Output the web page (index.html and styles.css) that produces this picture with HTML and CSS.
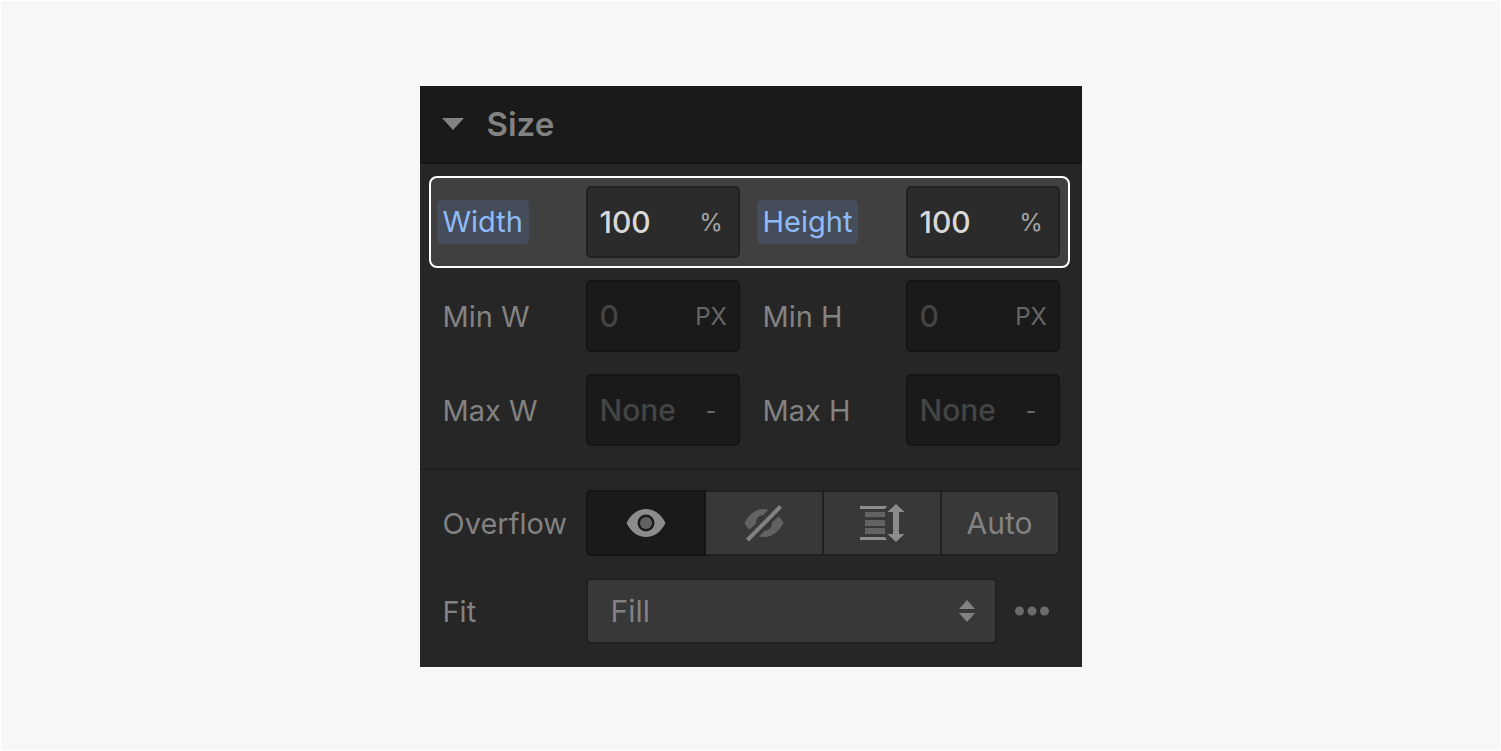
FILE: index.html
```html
<!DOCTYPE html>
<html lang="en">

<head>
    <meta charset="UTF-8">
    <meta name="viewport" content="width=device-width, initial-scale=1.0">
    <title>Size</title>
    <link rel="stylesheet" href="styles.css">
</head>

<body>
    <div class="panel">
        <button class="panel-header">
            <svg class="arrow" width="22" height="12" viewBox="0 0 22 12">
                <path d="M0 0H22L11 12Z" />
            </svg>
            <span>Size</span>
        </button>

        <!-- width / height -->
        <div class="sizes">
            <div class="row highlighted">
                <label for="width"><span class="tag">Width</span></label>
                <div class="field">
                    <input type="text" id="width" value="100">
                    <button class="unit">%</button>
                </div>
                <label class="second" for="height"><span class="tag">Height</span></label>
                <div class="field">
                    <input type="text" id="height" value="100">
                    <button class="unit">%</button>
                </div>
            </div>
            <div class="row">
                <label for="minW">Min W</label>
                <div class="field">
                    <input type="text" id="minW" placeholder="0">
                    <button class="unit">PX</button>
                </div>
                <label class="second" for="minH">Min H</label>
                <div class="field">
                    <input type="text" id="minH" placeholder="0">
                    <button class="unit">PX</button>
                </div>
            </div>
            <div class="row">
                <label for="maxW">Max W</label>
                <div class="field">
                    <input type="text" id="maxW" placeholder="None">
                    <button class="unit">-</button>
                </div>
                <label class="second" for="maxH">Max H</label>
                <div class="field">
                    <input type="text" id="maxH" placeholder="None">
                    <button class="unit">-</button>
                </div>
            </div>
        </div>

        <!-- overflow / fit -->
        <div class="options">
            <div class="option">
                <span class="option-label" id="overflowLabel">Overflow</span>
                <div class="segments" role="group" aria-labelledby="overflowLabel">
                    <button class="active" aria-label="Visible" aria-pressed="true">
                        <svg width="40" height="40" viewBox="0 0 40 40">
                            <path class="light" fill-rule="evenodd" d="M0.5 20C5 11 12 6 20 6S35 11 39.500 20C35 29 28 34 20 34S5 29 0.500 20ZM20 11.500A8.500 8.500 0 1 0 20 28.500A8.500 8.500 0 1 0 20 11.500Z" />
                            <circle class="dim" cx="20" cy="20" r="6" />
                        </svg>
                    </button>
                    <button aria-label="Hidden">
                        <svg width="40" height="40" viewBox="0 0 40 40">
                            <path class="dim" d="M24.500 6.500C13 4 5 11 0.500 20C2 23 3.500 25 5.500 26.500L12 20.500C11.500 16 15 12 19.500 12Z" />
                            <path class="dim" d="M15 33.500C27 36 35 29 39.500 20C38 17 36.500 15 34.500 13.500L28 19.500C28.500 24 25 28 20.500 28Z" />
                            <path class="stroke" d="M3.500 37L36.500 3.500" />
                        </svg>
                    </button>
                    <button aria-label="Scroll">
                        <svg width="46" height="40" viewBox="0 0 46 40">
                            <path class="light" d="M1 3H28L26 6H1ZM1 34H26L28 37H1Z" />
                            <path class="dim" d="M6 9H26V14H6ZM6 17H26V23H6ZM6 25H26V31H6Z" />
                            <path class="light" d="M37 1L45.500 9H40V31H45.500L37 39L28.500 31H34V9H28.500Z" />
                        </svg>
                    </button>
                    <button>Auto</button>
                </div>
            </div>
            <div class="option">
                <label class="option-label" for="fit">Fit</label>
                <div class="select">
                    <select id="fit">
                        <option>Fill</option>
                        <option>Contain</option>
                        <option>Cover</option>
                        <option>None</option>
                    </select>
                    <svg class="carets" width="16" height="22" viewBox="0 0 16 22">
                        <path d="M8 0L16 9H0ZM8 22L0 13H16Z" />
                    </svg>
                </div>
                <button class="more" aria-label="More">
                    <svg width="34" height="10" viewBox="0 0 34 10">
                        <circle cx="4.500" cy="5" r="4.500" />
                        <circle cx="17" cy="5" r="4.500" />
                        <circle cx="29.500" cy="5" r="4.500" />
                    </svg>
                </button>
            </div>
        </div>
    </div>
</body>

</html>
```
FILE: styles.css
```css
* {
    box-sizing: border-box;
}

body {
    min-height: 100vh;
    margin: 0;
    padding: 85px 20px 20px;
    background-color: #f5f7f9;
    border: 1px solid #fff;
    font-family: Inter, "Liberation Sans", sans-serif;
    font-size: 30px;
    color: #828282;
}

button,
input,
select {
    font: inherit;
    color: inherit;
    margin: 0;
    padding: 0;
    border: none;
    background: none;
}

svg {
    display: block;
}

label,
.option-label {
    font-size: 29px;
}

.panel {
    max-width: 662px;
    margin: 0 auto;
    background-color: #262626;
}

.panel-header {
    display: flex;
    align-items: center;
    gap: 23px;
    width: 100%;
    height: 78px;
    padding: 0 22px;
    background-color: #1a1a1a;
    border-bottom: 2px solid #151515;
    font-size: 33px;
    font-weight: 600;
}

.arrow {
    fill: #828282;
}

.sizes {
    display: flex;
    flex-direction: column;
    gap: 2px;
    padding: 12px 12px 12px 9px;
    border-bottom: 2px solid #1f1f1f;
}

.row {
    display: grid;
    grid-template-columns: 143px minmax(0, 1fr) 166px minmax(0, 1fr);
    align-items: center;
    padding: 8px 8px 8px 12px;
    border: 2px solid transparent;
    border-radius: 8px;
}

.row.highlighted {
    background-color: #404040;
    border-color: #fff;
}

.second {
    padding-left: 23px;
}

.tag {
    display: inline-block;
    margin-left: -6px;
    padding: 0 6px;
    line-height: 44px;
    border-radius: 5px;
    background-color: #454d5b;
    color: #8ebbf8;
}

.field {
    display: flex;
    height: 72px;
    background-color: #1a1a1a;
    border: 2px solid #151515;
    border-radius: 5px;
}

.field input {
    flex: 1;
    width: 100%;
    min-width: 0;
    padding-left: 12px;
    font-weight: 500;
}

.field input::placeholder {
    color: #444;
    opacity: 1;
}

.unit {
    flex: none;
    width: 53px;
    font-size: 24px;
    color: #666;
}

.highlighted .field {
    background-color: #2b2b2b;
    border-color: #212121;
}

.highlighted input {
    color: #d9d9d9;
}

.highlighted .unit {
    color: #a6a6a6;
}

.options {
    display: flex;
    flex-direction: column;
    gap: 22px;
    padding: 20px 22px 23px 23px;
}

.option {
    display: flex;
    align-items: center;
}

.option-label {
    width: 143px;
}

.segments {
    flex: 1;
    display: grid;
    grid-template-columns: repeat(4, 1fr);
    gap: 2px;
    height: 66px;
    padding: 2px;
    background-color: #202020;
    border-radius: 5px;
}

.segments button {
    display: flex;
    align-items: center;
    justify-content: center;
    background-color: #383838;
}

.segments button:last-child {
    border-radius: 0 4px 4px 0;
}

.segments .active {
    margin: -2px;
    background-color: #1a1a1a;
    border: 2px solid #151515;
    border-radius: 5px 0 0 5px;
}

.light {
    fill: #8c8c8c;
}

.dim {
    fill: #626262;
}

.stroke {
    stroke: #828282;
    stroke-width: 4;
}

.select {
    position: relative;
    flex: 1;
}

.select select {
    display: block;
    width: 100%;
    height: 66px;
    padding-left: 23px;
    appearance: none;
    background-color: #383838;
    border: 2px solid #202020;
    border-radius: 5px;
}

.carets {
    position: absolute;
    top: 22px;
    right: 22px;
    fill: #828282;
    pointer-events: none;
}

.more {
    display: flex;
    justify-content: center;
    width: 55px;
    margin-left: 8px;
    fill: #6b6b6b;
}
```
